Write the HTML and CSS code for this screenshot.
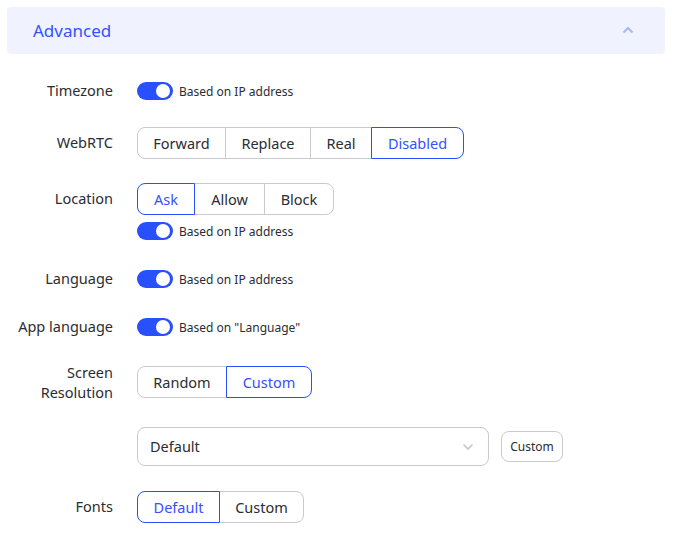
FILE: index.html
```html
<!DOCTYPE html>
<html>
<head>
  <title>Advanced settings</title>
  <link rel="stylesheet" href="styles.css">
</head>
<body>
  <div class="panel">
    <div class="panel-head">
      <span class="panel-title">Advanced</span>
      <svg class="chevron" width="12" height="8" viewBox="0 0 12 8"><path d="M1.5 6.5 L6 2 L10.5 6.5" fill="none" stroke="#a9b6ff" stroke-width="2"/></svg>
    </div>

    <div class="form">
      <div class="row row-timezone">
        <div class="label">Timezone</div>
        <div class="control">
          <div class="switch-line"><span class="switch"></span><span class="hint">Based on IP address</span></div>
        </div>
      </div>

      <div class="row row-webrtc">
        <div class="label">WebRTC</div>
        <div class="control">
          <div class="group">
            <button class="seg w-forward">Forward</button>
            <button class="seg w-replace">Replace</button>
            <button class="seg w-real">Real</button>
            <button class="seg w-disabled active">Disabled</button>
          </div>
        </div>
      </div>

      <div class="row row-location">
        <div class="label">Location</div>
        <div class="control">
          <div class="group">
            <button class="seg w-ask active">Ask</button>
            <button class="seg w-allow">Allow</button>
            <button class="seg w-block">Block</button>
          </div>
          <div class="switch-line sub"><span class="switch"></span><span class="hint">Based on IP address</span></div>
        </div>
      </div>

      <div class="row row-language">
        <div class="label">Language</div>
        <div class="control">
          <div class="switch-line"><span class="switch"></span><span class="hint">Based on IP address</span></div>
        </div>
      </div>

      <div class="row row-applang">
        <div class="label">App language</div>
        <div class="control">
          <div class="switch-line"><span class="switch"></span><span class="hint">Based on "Language"</span></div>
        </div>
      </div>

      <div class="row row-screen">
        <div class="label two-line">Screen<br>Resolution</div>
        <div class="control">
          <div class="group">
            <button class="seg w-random">Random</button>
            <button class="seg w-custom active">Custom</button>
          </div>
        </div>
      </div>

      <div class="row row-select">
        <div class="label"></div>
        <div class="control select-line">
          <div class="select">
            <span>Default</span>
            <svg width="12" height="8" viewBox="0 0 12 8"><path d="M1.5 1.5 L6 6 L10.5 1.5" fill="none" stroke="#c4c6cc" stroke-width="1.6"/></svg>
          </div>
          <button class="small-btn">Custom</button>
        </div>
      </div>

      <div class="row row-fonts">
        <div class="label">Fonts</div>
        <div class="control">
          <div class="group">
            <button class="seg w-fdefault active">Default</button>
            <button class="seg w-fcustom">Custom</button>
          </div>
        </div>
      </div>
    </div>
  </div>
</body>
</html>
```

FILE: styles.css
```css
body {
  margin: 0;
  font-family: "Noto Sans", "Open Sans", sans-serif;
  color: #2b2d33;
  background: #fff;
}
.panel {
  padding: 7px 8px 0 7px;
}
.panel-head {
  height: 47px;
  background-color: #f0f3fe;
  border-radius: 4px;
  display: flex;
  align-items: center;
  justify-content: space-between;
  padding: 0 31px 0 26px;
}
.panel-title {
  font-size: 17px;
  color: #3550ff;
}
.chevron {
  margin-top: -2px;
}
.form {
  padding-top: 21px;
}
.row {
  display: flex;
  align-items: flex-start;
}
.label {
  width: 106px;
  flex: none;
  text-align: right;
  font-size: 14.5px;
  line-height: 30px;
  padding-right: 24px;
}
.label.two-line {
  line-height: 20px;
  margin-top: -4px;
  margin-bottom: -8px;
}
.control {
  display: flex;
  flex-direction: column;
}
.row-webrtc { margin-top: 20px; }
.row-location { margin-top: 24px; }
.row-language { margin-top: 23px; }
.row-applang { margin-top: 16px; }
.row-screen { margin-top: 23px; }
.row-select { margin-top: 29px; }
.row-fonts { margin-top: 25px; }

.switch-line {
  height: 32px;
  display: flex;
  align-items: center;
}
.switch-line.sub {
  height: 18px;
  margin-top: 7px;
}
.switch {
  width: 36px;
  height: 18px;
  border-radius: 9px;
  background-color: #2850ff;
  position: relative;
  flex: none;
}
.switch::after {
  content: "";
  position: absolute;
  right: 3px;
  top: 2px;
  width: 14px;
  height: 14px;
  border-radius: 50%;
  background: #fff;
}
.hint {
  font-size: 12px;
  margin-left: 6px;
  color: #2b2d33;
}
.group {
  display: flex;
}
.seg {
  height: 32px;
  font-family: inherit;
  font-size: 14.5px;
  line-height: 28px;
  color: #2b2d33;
  background: #fff;
  border: 1px solid #c8cad0;
  margin-left: -1px;
  padding: 0;
  cursor: pointer;
  position: relative;
}
.seg:first-child {
  margin-left: 0;
  border-radius: 8px 0 0 8px;
}
.seg:last-child {
  border-radius: 0 8px 8px 0;
}
.seg.active {
  border-color: #2850ff;
  color: #3550ff;
  z-index: 1;
}
.w-forward { width: 89px; }
.w-replace { width: 86px; }
.w-real { width: 62px; }
.w-disabled { width: 93px; }
.w-ask { width: 58px; }
.w-allow { width: 71px; }
.w-block { width: 70px; }
.w-random { width: 90px; }
.w-custom { width: 86px; }
.w-fdefault { width: 83px; }
.w-fcustom { width: 85px; }

.select-line {
  flex-direction: row;
  align-items: center;
}
.select {
  width: 324px;
  height: 37px;
  border: 1px solid #c8cad0;
  border-radius: 8px;
  display: flex;
  align-items: center;
  justify-content: space-between;
  padding: 0 14px 0 12px;
  font-size: 14.5px;
}
.select span {
  margin-top: -2px;
}
.small-btn {
  margin-left: 12px;
  height: 31px;
  width: 62px;
  padding: 0;
  font-family: inherit;
  font-size: 12px;
  color: #2b2d33;
  background: #fff;
  border: 1px solid #c8cad0;
  border-radius: 8px;
}
```
